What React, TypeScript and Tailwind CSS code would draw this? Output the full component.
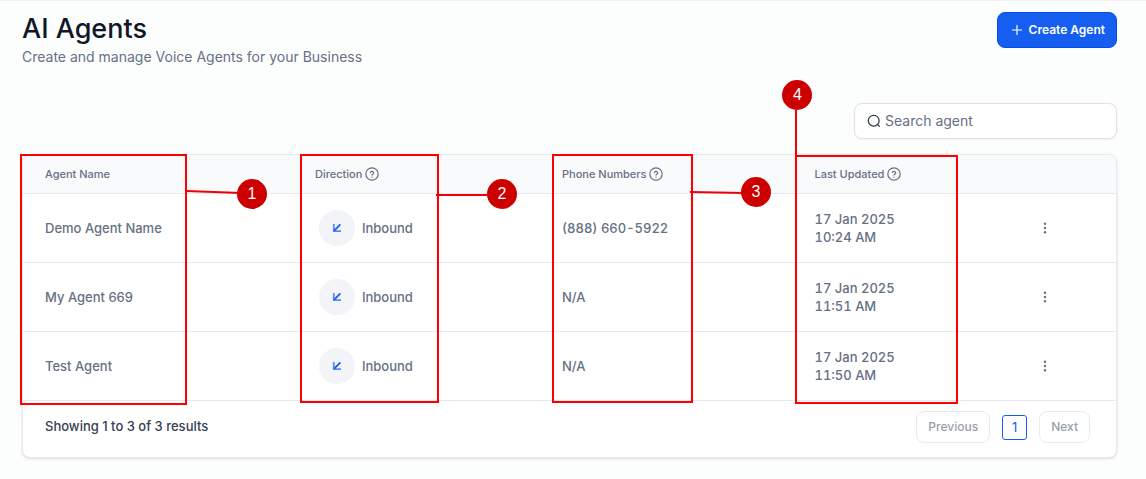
import type { ReactNode } from "react";

interface Agent {
  id: number;
  name: string;
  direction: string;
  phone: string;
  date: string;
  time: string;
}

const agents: Agent[] = [
  { id: 1, name: "Demo Agent Name", direction: "Inbound", phone: "(888) 660-5922", date: "17 Jan 2025", time: "10:24 AM" },
  { id: 2, name: "My Agent 669", direction: "Inbound", phone: "N/A", date: "17 Jan 2025", time: "11:51 AM" },
  { id: 3, name: "Test Agent", direction: "Inbound", phone: "N/A", date: "17 Jan 2025", time: "11:50 AM" },
];

function HelpIcon() {
  return (
    <svg className="size-[14px]" viewBox="0 0 14 14" fill="none" stroke="currentColor" strokeWidth="1.2" strokeLinecap="round" strokeLinejoin="round" aria-hidden="true">
      <circle cx="7" cy="7" r="6.2" />
      <path d="M5.3 5.5a1.75 1.75 0 0 1 3.4.5c0 1.1-1.7 1.3-1.7 2.1" />
      <path d="M7 10.1v.05" />
    </svg>
  );
}

function InboundIcon() {
  return (
    <svg className="size-[10px]" viewBox="0 0 10 10" fill="none" aria-hidden="true">
      <path d="M1.8 1v7.2H9" stroke="#5b8af7" strokeWidth="1.8" />
      <path d="M8.4 1.4L2 7.9" stroke="#155eef" strokeWidth="1.8" />
    </svg>
  );
}

function Badge({ children }: { children: ReactNode }) {
  return (
    <span className="flex size-[30px] shrink-0 items-center justify-center rounded-full bg-[#cc0000] font-['Liberation_Sans',Arial,sans-serif] text-base leading-none font-normal text-white">
      {children}
    </span>
  );
}

// red outline around a whole column, with its number to the right
function ColumnCallout({ number, from, to, className, box, side }: { number: number; from: number; to: number; className: string; box: string; side: string }) {
  return (
    <span className={`pointer-events-none absolute top-[-1px] flex items-start ${className}`}>
      <span className={`border-2 border-[#ff0000] ${box}`} />
      <span className={`flex ${side}`}>
        <svg className="h-[30px] w-12" viewBox="0 0 48 30" overflow="visible" aria-hidden="true">
          <path d={`M-3 ${from}L52 ${to}`} stroke="#ee0008" strokeWidth="1.8" />
        </svg>
        <Badge>{number}</Badge>
      </span>
    </span>
  );
}

function HeadCell({ label, help, className, children }: { label: string; help?: boolean; className: string; children?: ReactNode }) {
  return (
    <th scope="col" className={`relative h-[39px] border-b border-[#e7e9ee] bg-[#f9fafb] px-[22px] pb-px text-left text-[11px] font-medium ${className}`}>
      <span className="flex items-center gap-[3px]">
        {label}
        {help && <HelpIcon />}
      </span>
      {children}
    </th>
  );
}

function Header() {
  return (
    <header className="flex items-start justify-between">
      <div>
        <h1 className="text-[27px] leading-[34px] font-medium text-[#101828]">AI Agents</h1>
        <p className="text-sm leading-[22px] text-[#667085]">
          Create and manage Voice Agents for your Business
        </p>
      </div>
      <button type="button" className="flex h-9 items-center gap-[7px] rounded-lg border border-[#004eeb] bg-[#155eef] pr-[11px] pl-[14px] text-xs font-semibold text-white">
        <svg className="size-[10px]" viewBox="0 0 10 10" stroke="currentColor" strokeWidth="1.2" strokeLinecap="round" aria-hidden="true">
          <path d="M5 .5v9M.5 5h9" />
        </svg>
        Create Agent
      </button>
    </header>
  );
}

function Search() {
  return (
    <label className="flex h-9 w-[263px] items-center gap-1 rounded-lg border border-[#dfe1e8] bg-white px-3 shadow-xs">
      <svg className="size-[14px] shrink-0" viewBox="0 0 14 14" fill="none" stroke="#344054" strokeWidth="1.3" strokeLinecap="round" aria-hidden="true">
        <circle cx="6.7" cy="6.7" r="5.4" />
        <path d="M10.6 10.6l1.8 1.8" />
      </svg>
      <input type="search" aria-label="Search agent" placeholder="Search agent" className="w-full min-w-0 bg-transparent text-sm outline-none placeholder:text-[#667085]" />
    </label>
  );
}

function AgentRow({ agent }: { agent: Agent }) {
  const cell = "h-[69px] border-b border-[#e7e9ee] px-[22px]";
  return (
    <tr>
      <td className={cell}>{agent.name}</td>
      <td className={cell}>
        <div className="flex items-center gap-[7px] pl-1">
          <span className="flex size-9 items-center justify-center rounded-full bg-[#f2f4f7]">
            <InboundIcon />
          </span>
          {agent.direction}
        </div>
      </td>
      <td className={`tabular-nums ${cell}`}>{agent.phone}</td>
      <td className={`tabular-nums ${cell}`}>
        <div>{agent.date}</div>
        <div>{agent.time}</div>
      </td>
      <td className={cell}>
        <button type="button" aria-label={`Actions for ${agent.name}`} className="flex size-6 items-center justify-center">
          <svg className="h-3 w-1" viewBox="0 0 4 12" fill="currentColor" aria-hidden="true">
            <circle cx="2" cy="1.8" r="1.2" />
            <circle cx="2" cy="6" r="1.2" />
            <circle cx="2" cy="10.2" r="1.2" />
          </svg>
        </button>
      </td>
    </tr>
  );
}

function Pagination() {
  const step = "h-8 rounded-lg border border-[#e9ebef] px-[11px] text-xs font-medium text-[#98a0ad]";
  return (
    <div className="flex items-center justify-between pt-2.5 pr-[26px] pb-3.5 pl-[22px]">
      <p className="text-[13px] font-medium text-[#344054]">Showing 1 to 3 of 3 results</p>
      <nav aria-label="Pagination" className="flex items-center gap-3">
        <button type="button" disabled className={step}>Previous</button>
        <button type="button" aria-current="page" className="size-[25px] rounded-[3px] border border-[#155eef] text-[13px] leading-none text-[#155eef]">1</button>
        <button type="button" disabled className={step}>Next</button>
      </nav>
    </div>
  );
}

export default function App() {
  return (
    <div className="min-h-screen border-t border-[#f0f1f3] bg-[#fcfefd] pt-[11px] pr-[29px] pb-5 pl-[22px] font-[Inter,sans-serif]">
      <Header />
      <div className="mt-[35px] flex justify-end">
        <Search />
      </div>
      <section className="mt-[15px] rounded-lg border border-[#e7e9ee] bg-white shadow-sm">
        <table className="w-full table-fixed border-separate border-spacing-0 text-[13px] leading-[18px] font-medium text-[#667085]">
          <thead>
            <tr>
              <HeadCell label="Agent Name" className="w-[24.7%] rounded-tl-lg">
                <ColumnCallout number={1} from={12} to={14} className="left-[-3px]" box="h-[251px] w-[167px]" side="mt-[25px] ml-[2px]" />
              </HeadCell>
              <HeadCell label="Direction" help className="w-[22.6%]">
                <ColumnCallout number={2} from={16} to={16} className="left-[7px]" box="h-[249px] w-[139px]" side="mt-[25px]" />
              </HeadCell>
              <HeadCell label="Phone Numbers" help className="w-[23.1%]">
                <ColumnCallout number={3} from={15} to={16} className="left-3" box="h-[249px] w-[141px]" side="mt-[23px]" />
              </HeadCell>
              <HeadCell label="Last Updated" help className="w-[20%]">
                <span className="pointer-events-none absolute top-[-75px] left-[-10px] flex flex-col">
                  <Badge>4</Badge>
                  <span className="ml-[13px] h-[45px] w-[2px] bg-[#ee0008]" />
                  <span className="ml-[13px] h-[249px] w-[163px] border-2 border-[#ff0000]" />
                </span>
              </HeadCell>
              <th scope="col" aria-label="Actions" className="rounded-tr-lg border-b border-[#e7e9ee] bg-[#f9fafb]" />
            </tr>
          </thead>
          <tbody>
            {agents.map((agent) => (
              <AgentRow agent={agent} key={agent.id} />
            ))}
          </tbody>
        </table>
        <Pagination />
      </section>
    </div>
  );
}
